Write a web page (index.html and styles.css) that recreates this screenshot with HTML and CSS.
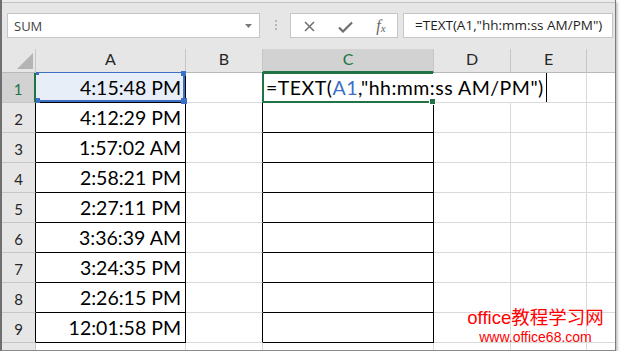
FILE: index.html
```html
<!DOCTYPE html>
<html lang="en">
<head>
    <meta charset="UTF-8">
    <title>TEXT time format</title>
    <link rel="stylesheet" href="styles.css">
</head>
<body>

    <div class="window">
        <div class="strip"></div>
        <div class="toolbar">
            <div class="namebox">
                <span>SUM</span>
                <svg width="7" height="4" viewBox="0 0 7 4"><polygon points="0,0 7,0 3.5,4" fill="#7a7a7a"/></svg>
            </div>
            <div class="grip"><i></i><i></i><i></i></div>
            <div class="iconbox">
                <span class="ib">
                    <svg width="11" height="11" viewBox="0 0 11 11"><path d="M1 1 L10 10 M10 1 L1 10" stroke="#6e6e6e" stroke-width="1.5" fill="none"/></svg>
                </span>
                <span class="ib">
                    <svg width="15" height="12" viewBox="0 0 15 12"><path d="M1 6.5 L5 10.5 L14 1.5" stroke="#6e6e6e" stroke-width="2.2" fill="none"/></svg>
                </span>
                <span class="ib"><span class="fx">f<sub>x</sub></span></span>
            </div>
            <div class="formula">=TEXT(A1,"hh:mm:ss AM/PM")</div>
        </div>

        <div class="sheet">
            <!-- column headers -->
            <div class="hd corner">
                <svg width="16" height="16" viewBox="0 0 16 16"><polygon points="0,16 16,16 16,0" fill="#b4b4b4"/></svg>
            </div>
            <div class="hd">A</div>
            <div class="hd">B</div>
            <div class="hd sel">C</div>
            <div class="hd">D</div>
            <div class="hd">E</div>
            <div class="hd last"></div>

            <!-- row 1 -->
            <div class="rh sel">1</div>
            <div class="c t bk refcell">4:15:48 PM
                <div class="ref"><i class="h tl"></i><i class="h tr"></i><i class="h bl"></i><i class="h br"></i></div>
            </div>
            <div class="c"></div>
            <div class="c bk active">
                <div class="frame"><i class="fill"></i></div>
                <span class="ftext">=TEXT(<span class="blue">A1</span>,"hh:mm:ss AM/PM")</span><span class="caret"></span>
            </div>
            <div class="c open"></div>
            <div class="c"></div>
            <div class="c last"></div>

            <div class="rh bkr">2</div><div class="c t bk">4:12:29 PM</div><div class="c bkr"></div><div class="c bk"></div><div class="c"></div><div class="c"></div><div class="c last"></div>
            <div class="rh bkr">3</div><div class="c t bk">1:57:02 AM</div><div class="c bkr"></div><div class="c bk"></div><div class="c"></div><div class="c"></div><div class="c last"></div>
            <div class="rh bkr">4</div><div class="c t bk">2:58:21 PM</div><div class="c bkr"></div><div class="c bk"></div><div class="c"></div><div class="c"></div><div class="c last"></div>
            <div class="rh bkr">5</div><div class="c t bk">2:27:11 PM</div><div class="c bkr"></div><div class="c bk"></div><div class="c"></div><div class="c"></div><div class="c last"></div>
            <div class="rh bkr">6</div><div class="c t bk">3:36:39 AM</div><div class="c bkr"></div><div class="c bk"></div><div class="c"></div><div class="c"></div><div class="c last"></div>
            <div class="rh bkr">7</div><div class="c t bk">3:24:35 PM</div><div class="c bkr"></div><div class="c bk"></div><div class="c"></div><div class="c"></div><div class="c last"></div>
            <div class="rh bkr">8</div><div class="c t bk">2:26:15 PM</div><div class="c bkr"></div><div class="c bk"></div><div class="c"></div><div class="c"></div><div class="c last"></div>
            <div class="rh bkr">9</div><div class="c t bk">12:01:58 PM</div><div class="c bkr"></div><div class="c bk"></div><div class="c"></div><div class="c"></div><div class="c last"></div>

            <!-- row 10, cut off by the window edge -->
            <div class="rh end"></div><div class="c end"></div><div class="c end"></div><div class="c end"></div><div class="c end"></div><div class="c end"></div><div class="c end last"></div>
        </div>

        <div class="watermark">
            <div class="wm1">office教程学习网</div>
            <div class="wm2">www.office68.com</div>
        </div>
    </div>

</body>
</html>
```

FILE: styles.css
```css
body {
    margin: 0;
    background-color: #fff;
    font-family: "Open Sans", sans-serif;
}
.window {
    position: relative;
    width: 613px;
    background-color: #e6e6e6;
    border-left: 2px solid #6f6f6f;
    border-right: 1px solid #7c7c7c;
    border-bottom: 1px solid #8a8a8a;
    box-shadow: 1px 2px 3px rgba(0, 0, 0, 0.35);
}
.strip {
    height: 2px;
    background-color: #ececec;
}
.toolbar {
    height: 47px;
    box-sizing: border-box;
    border-top: 1px solid #c4c4c4;
    padding-top: 10px;
    display: flex;
    align-items: flex-start;
}
.namebox {
    margin-left: 5px;
    width: 253px;
    height: 25px;
    box-sizing: border-box;
    border: 1px solid #c6c6c6;
    background-color: #fff;
    display: flex;
    align-items: center;
    justify-content: space-between;
    padding: 0 7px 0 6px;
    font-size: 13px;
    color: #444;
}
.grip {
    margin: 7px 13px 0 15px;
    width: 2px;
    display: flex;
    flex-direction: column;
    gap: 2px;
}
.grip i {
    width: 2px;
    height: 2px;
    background-color: #b5b5b5;
}
.iconbox {
    width: 108px;
    height: 25px;
    box-sizing: border-box;
    border: 1px solid #c6c6c6;
    background-color: #fff;
    display: flex;
    overflow: hidden;
    margin-right: 5px;
}
.ib {
    width: 36px;
    flex-shrink: 0;
    display: flex;
    align-items: center;
    justify-content: center;
    padding-top: 2px;
}
.fx {
    font-family: "Liberation Serif", serif;
    font-style: italic;
    font-size: 16px;
    color: #666;
    line-height: 16px;
}
.fx sub {
    font-size: 11px;
    vertical-align: -1px;
}
.formula {
    flex: 1;
    margin-right: 2px;
    height: 25px;
    box-sizing: border-box;
    border: 1px solid #c6c6c6;
    background-color: #fff;
    padding-left: 11px;
    font-size: 13.5px;
    line-height: 23px;
    color: #1e1e1e;
    white-space: nowrap;
}

/* sheet grid */
.sheet {
    display: grid;
    grid-template-columns: 34px 150px 77px 171px 77px 76px 28px;
    grid-template-rows: 24px repeat(9, 30px) 7px;
    background-color: #fff;
    font-family: Lato, sans-serif;
}
.sheet > div {
    box-sizing: border-box;
}
.hd {
    background-color: #e6e6e6;
    border-right: 1px solid #c6c6c6;
    border-bottom: 1px solid #b9b9b9;
    display: flex;
    justify-content: center;
    align-items: flex-end;
    padding-bottom: 5px;
    font-size: 16px;
    line-height: 16px;
    color: #262626;
}
.hd.sel {
    background-color: #d2d2d2;
    color: #217346;
    border-bottom: 2px solid #217346;
    padding-bottom: 4px;
}
.corner {
    justify-content: flex-end;
    padding: 0 2px 3px 0;
}
.rh {
    background-color: #e6e6e6;
    border-right: 1px solid #c6c6c6;
    border-bottom: 1px solid #c6c6c6;
    display: flex;
    justify-content: center;
    align-items: flex-end;
    padding-bottom: 5px;
    font-size: 15px;
    line-height: 15px;
    color: #262626;
}
.rh.sel {
    background-color: #d2d2d2;
    color: #217346;
    border-right: 2px solid #217346;
}
.c {
    border-right: 1px solid #dadada;
    border-bottom: 1px solid #dadada;
    display: flex;
    align-items: flex-end;
    padding-bottom: 5px;
    font-size: 19.5px;
    line-height: 19px;
    color: #000;
    white-space: nowrap;
}
.t {
    justify-content: flex-end;
    padding-right: 4px;
}
.bk {
    border-right-color: #000;
    border-bottom-color: #000;
}
.bkr {
    border-right-color: #000;
}
.last {
    border-right: none;
}
.end {
    border-bottom: none;
}
.open {
    border-right-color: transparent;
}

/* formula reference on A1 */
.refcell {
    position: relative;
    background-color: #e8eef8;
}
.ref {
    position: absolute;
    left: 0;
    top: -1px;
    right: 0;
    bottom: 0;
    border-top: 1px solid #3d6fc7;
    border-right: 2px solid #3d6fc7;
    border-bottom: 2px solid #3d6fc7;
}
.h {
    position: absolute;
    width: 5px;
    height: 5px;
    background-color: #3d6fc7;
}
.tl { left: 0; top: -1px; width: 3px; height: 3px; }
.tr { right: -3px; top: -2px; }
.bl { left: 0; bottom: -3px; width: 4px; }
.br { right: -4px; bottom: -4px; width: 6px; height: 6px; }

/* active cell C1, text runs on into D1 and E1 */
.active {
    position: relative;
    padding-left: 3px;
    border-right-color: transparent;
}
.ftext {
    position: relative;
    letter-spacing: 0.5px;
}
.blue {
    color: #3d6fc7;
}
.caret {
    position: relative;
    width: 1px;
    height: 29px;
    margin: 0 0 -5px 2px;
    background-color: #000;
    flex-shrink: 0;
}
.frame {
    position: absolute;
    left: -1px;
    top: -1px;
    right: 0;
    bottom: -1px;
    border: 2px solid #217346;
    border-right: none;
}
.fill {
    position: absolute;
    right: -3px;
    bottom: -4px;
    width: 5px;
    height: 5px;
    background-color: #217346;
    border: 1px solid #fff;
}

.watermark {
    position: absolute;
    left: 456px;
    top: 307px;
    width: 155px;
    text-align: center;
    color: #ff0000;
    font-family: "Liberation Sans", "Noto Sans CJK SC", sans-serif;
}
.wm1 {
    font-size: 18.5px;
    line-height: 22px;
}
.wm2 {
    font-size: 14px;
    line-height: 16px;
}
```
